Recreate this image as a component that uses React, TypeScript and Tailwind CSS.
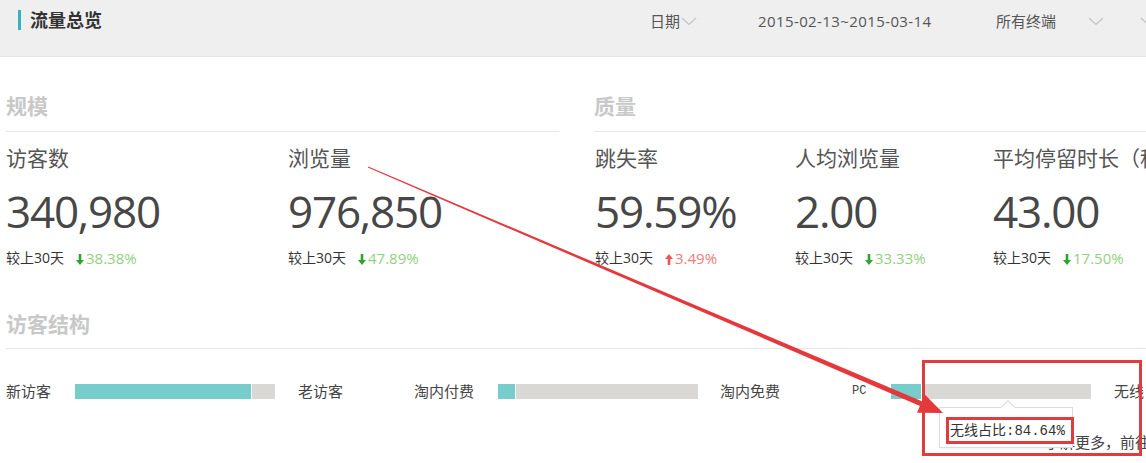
const cjk = "font-['Open_Sans','Noto_Sans_CJK_SC',sans-serif]";

const Chevron = ({ className = "" }: { className?: string }) => (
  <svg className={className} width="16" height="9" viewBox="0 0 16 9" fill="none">
    <path d="M1 1 L8 7.5 L15 1" stroke="#c4c4c4" strokeWidth="1.2" />
  </svg>
);

const Trend = ({ up, value }: { up?: boolean; value: string }) => (
  <span className={`ml-[12px] flex items-center text-[15px] ${up ? "text-[#f07a7a]" : "text-[#8fd27f]"}`}>
    <svg width="8" height="11" viewBox="0 0 8 11" className="mr-[2px] mt-[2px]">
      {up ? (
        <path d="M4 0 L8 5 L5.3 5 L5.3 11 L2.7 11 L2.7 5 L0 5 Z" fill="#f05555" />
      ) : (
        <path d="M4 11 L8 6 L5.3 6 L5.3 0 L2.7 0 L2.7 6 L0 6 Z" fill="#2ca52c" />
      )}
    </svg>
    {value}
  </span>
);

type Metric = { label: string; value: string; trend: string; up?: boolean; w: string };

const MetricCol = ({ m }: { m: Metric }) => (
  <div className={`${m.w} shrink-0 whitespace-nowrap`}>
    <div className="mt-[12px] text-[21px] leading-[28px] text-[#555]">{m.label}</div>
    <div className="mt-[14px] text-[44px] leading-[50px] text-[#474747] tracking-[-1.2px]">{m.value}</div>
    <div className="mt-[12px] flex items-center text-[14px] leading-[20px] text-[#333]">
      较上30天
      <Trend up={m.up} value={m.trend} />
    </div>
  </div>
);

const Heading = ({ text }: { text: string }) => (
  <div className="h-[75px] border-b border-[#e6e6e8] pt-[37px]">
    <div className="text-[21px] font-bold leading-[24px] text-[#c8c8c8]">{text}</div>
  </div>
);

const Bar = ({ pct }: { pct: number }) => (
  <div className="flex h-[15px] w-[200px] shrink-0 bg-[#d9d8d5]">
    <div className="h-full border-r border-white bg-[#76cdcc]" style={{ width: `${pct}%` }} />
  </div>
);

const left: Metric[] = [
  { label: "访客数", value: "340,980", trend: "38.38%", w: "w-[282px]" },
  { label: "浏览量", value: "976,850", trend: "47.89%", w: "w-[271px]" },
];
const right: Metric[] = [
  { label: "跳失率", value: "59.59%", trend: "3.49%", up: true, w: "w-[200px]" },
  { label: "人均浏览量", value: "2.00", trend: "33.33%", w: "w-[198px]" },
  { label: "平均停留时长（秒）", value: "43.00", trend: "17.50%", w: "w-[200px]" },
];

export default function App() {
  return (
    <div className={`relative h-[463px] w-[1146px] overflow-hidden bg-white ${cjk}`}>
      <header className="flex h-[57px] items-center border-b border-[#e4e4e6] bg-[#efeff0] whitespace-nowrap">
        <div className="flex w-[650px] shrink-0 items-center pl-[18px] -mt-[16px]">
          <div className="h-[20px] w-[3px] bg-[#37b3bf]" />
          <div className="ml-[9px] text-[18px] font-bold leading-[24px] text-[#333]">流量总览</div>
        </div>
        <div className="flex w-[108px] shrink-0 items-center -mt-[13px] text-[15px] text-[#555]">
          日期
          <Chevron className="ml-[1px]" />
        </div>
        <div className="w-[238px] shrink-0 -mt-[13px] text-[15px] tracking-[0.4px] text-[#555]">2015-02-13~2015-03-14</div>
        <div className="w-[92px] shrink-0 -mt-[13px] text-[15px] text-[#555]">所有终端</div>
        <div className="w-[52px] shrink-0 -mt-[13px]">
          <Chevron />
        </div>
        <div className="shrink-0 -mt-[13px]">
          <Chevron />
        </div>
      </header>

      <div className="flex pl-[6px]">
        <div className="w-[553px] shrink-0">
          <Heading text="规模" />
          <div className="flex">
            {left.map((m) => (
              <MetricCol key={m.label} m={m} />
            ))}
          </div>
        </div>
        <div className="ml-[35px] flex-1">
          <Heading text="质量" />
          <div className="flex pl-[1px]">
            {right.map((m) => (
              <MetricCol key={m.label} m={m} />
            ))}
          </div>
        </div>
      </div>

      <div className="mt-[44px] pl-[6px]">
        <div className="border-b border-[#e6e6e8] pb-[12px] text-[21px] font-bold leading-[24px] text-[#c8c8c8]">访客结构</div>
        <div className="mt-[32px] flex h-[20px] items-center whitespace-nowrap text-[15px] text-[#444]">
          <div className="w-[69px] shrink-0">新访客</div>
          <Bar pct={88.7} />
          <div className="ml-[23px] w-[116px] shrink-0">老访客</div>
          <div className="w-[84px] shrink-0">淘内付费</div>
          <Bar pct={9} />
          <div className="ml-[22px] w-[132px] shrink-0">淘内免费</div>
          <div className="w-[39px] shrink-0 font-['Liberation_Mono',monospace] text-[12px]">PC</div>
          <Bar pct={15.36} />
          <div className="ml-[23px] shrink-0">无线</div>
        </div>
        <div className="mt-[31px] ml-[1039px] whitespace-nowrap text-[15px] leading-[20px] text-[#444]">了解更多，前往查看</div>
      </div>

      <div className="absolute left-[939px] top-[407px] h-[41px] w-[134px] border border-[#dcdcdc] bg-white shadow-[0_1px_2px_rgba(0,0,0,0.05)]">
        <div className="absolute -top-[6px] left-[63px] h-[10px] w-[10px] rotate-45 border-l border-t border-[#dcdcdc] bg-white" />
        <div className="mt-[12px] ml-[10px] whitespace-nowrap text-[14px] leading-[20px] text-[#333]">
          无线占比<span className="font-['Liberation_Mono','Noto_Sans_CJK_SC',monospace]">:84.64%</span>
        </div>
      </div>

      <svg className="pointer-events-none absolute inset-0" width="1146" height="463" viewBox="0 0 1146 463">
        <polygon points="367.8,167.5 921.7,406.7 923.7,402.1 368.2,166.5" fill="#e5383d" />
        <polygon points="943,413 917,412.8 924.8,394.4" fill="#e5383d" />
        <rect x="923.5" y="361.5" width="217" height="93" fill="none" stroke="#e03c40" strokeWidth="3" />
        <rect x="947.5" y="418.5" width="125" height="24" fill="none" stroke="#e03c40" strokeWidth="3" />
      </svg>
    </div>
  );
}
